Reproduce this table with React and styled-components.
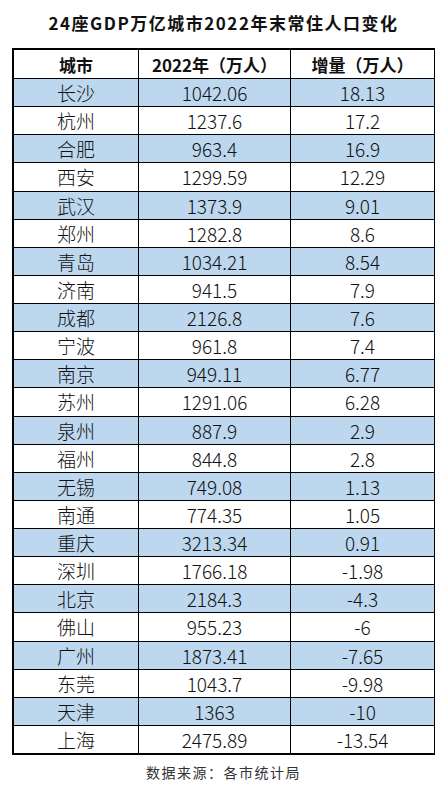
import React from "react";
import styled, { createGlobalStyle } from "styled-components";

const GlobalStyle = createGlobalStyle`
    body {
        margin: 0;
        background: #ffffff;
        font-family: "Noto Sans CJK SC", "Noto Sans", sans-serif;
    }
`;

const Page = styled.div`
    width: 447px;
    height: 789px;
    background: #ffffff;
    display: flex;
    flex-direction: column;
    align-items: center;
`;

const Title = styled.h1`
    margin: 0;
    height: 48px;
    display: flex;
    align-items: center;
    justify-content: center;
    font-size: 17px;
    font-weight: 700;
    letter-spacing: 1.5px;
    color: #111;
    padding-bottom: 4px;
    box-sizing: border-box;
`;

const Table = styled.div`
    width: 423px;
    box-sizing: border-box;
    border-style: solid;
    border-color: #000;
    border-width: 2px 1px 2px 2px;
`;

const Row = styled.div`
    display: grid;
    grid-template-columns: 124px 152px 144px;
    height: ${props => (props.head ? "28px" : "28.125px")};
    box-sizing: border-box;
    border-top: ${props => (props.head ? "none" : "1px solid #000")};
    background: ${props => (props.shaded ? "#bdd7ee" : "#ffffff")};
`;

const Cell = styled.div`
    display: flex;
    align-items: center;
    justify-content: center;
    box-sizing: border-box;
    border-left: ${props => (props.first ? "none" : "1px solid #000")};
    font-size: ${props => (props.head ? "17px" : "19px")};
    font-weight: ${props => (props.head ? 700 : 300)};
    color: #111;
    white-space: nowrap;
    line-height: 1;
`;

const Source = styled.div`
    padding-top: 8px;
    font-size: 14px;
    letter-spacing: 1.5px;
    color: #333;
    line-height: 18px;
`;

const data = [
    ["长沙", "1042.06", "18.13"],
    ["杭州", "1237.6", "17.2"],
    ["合肥", "963.4", "16.9"],
    ["西安", "1299.59", "12.29"],
    ["武汉", "1373.9", "9.01"],
    ["郑州", "1282.8", "8.6"],
    ["青岛", "1034.21", "8.54"],
    ["济南", "941.5", "7.9"],
    ["成都", "2126.8", "7.6"],
    ["宁波", "961.8", "7.4"],
    ["南京", "949.11", "6.77"],
    ["苏州", "1291.06", "6.28"],
    ["泉州", "887.9", "2.9"],
    ["福州", "844.8", "2.8"],
    ["无锡", "749.08", "1.13"],
    ["南通", "774.35", "1.05"],
    ["重庆", "3213.34", "0.91"],
    ["深圳", "1766.18", "-1.98"],
    ["北京", "2184.3", "-4.3"],
    ["佛山", "955.23", "-6"],
    ["广州", "1873.41", "-7.65"],
    ["东莞", "1043.7", "-9.98"],
    ["天津", "1363", "-10"],
    ["上海", "2475.89", "-13.54"]
];

const App = () => (
    <>
        <GlobalStyle />
        <Page>
            <Title>24座GDP万亿城市2022年末常住人口变化</Title>
            <Table>
                <Row head>
                    <Cell head first>城市</Cell>
                    <Cell head>2022年（万人）</Cell>
                    <Cell head>增量（万人）</Cell>
                </Row>
                {data.map((row, index) => (
                    <Row key={row[0]} shaded={index % 2 === 0}>
                        <Cell first>{row[0]}</Cell>
                        <Cell>{row[1]}</Cell>
                        <Cell>{row[2]}</Cell>
                    </Row>
                ))}
            </Table>
            <Source>数据来源：各市统计局</Source>
        </Page>
    </>
);

export default App;
